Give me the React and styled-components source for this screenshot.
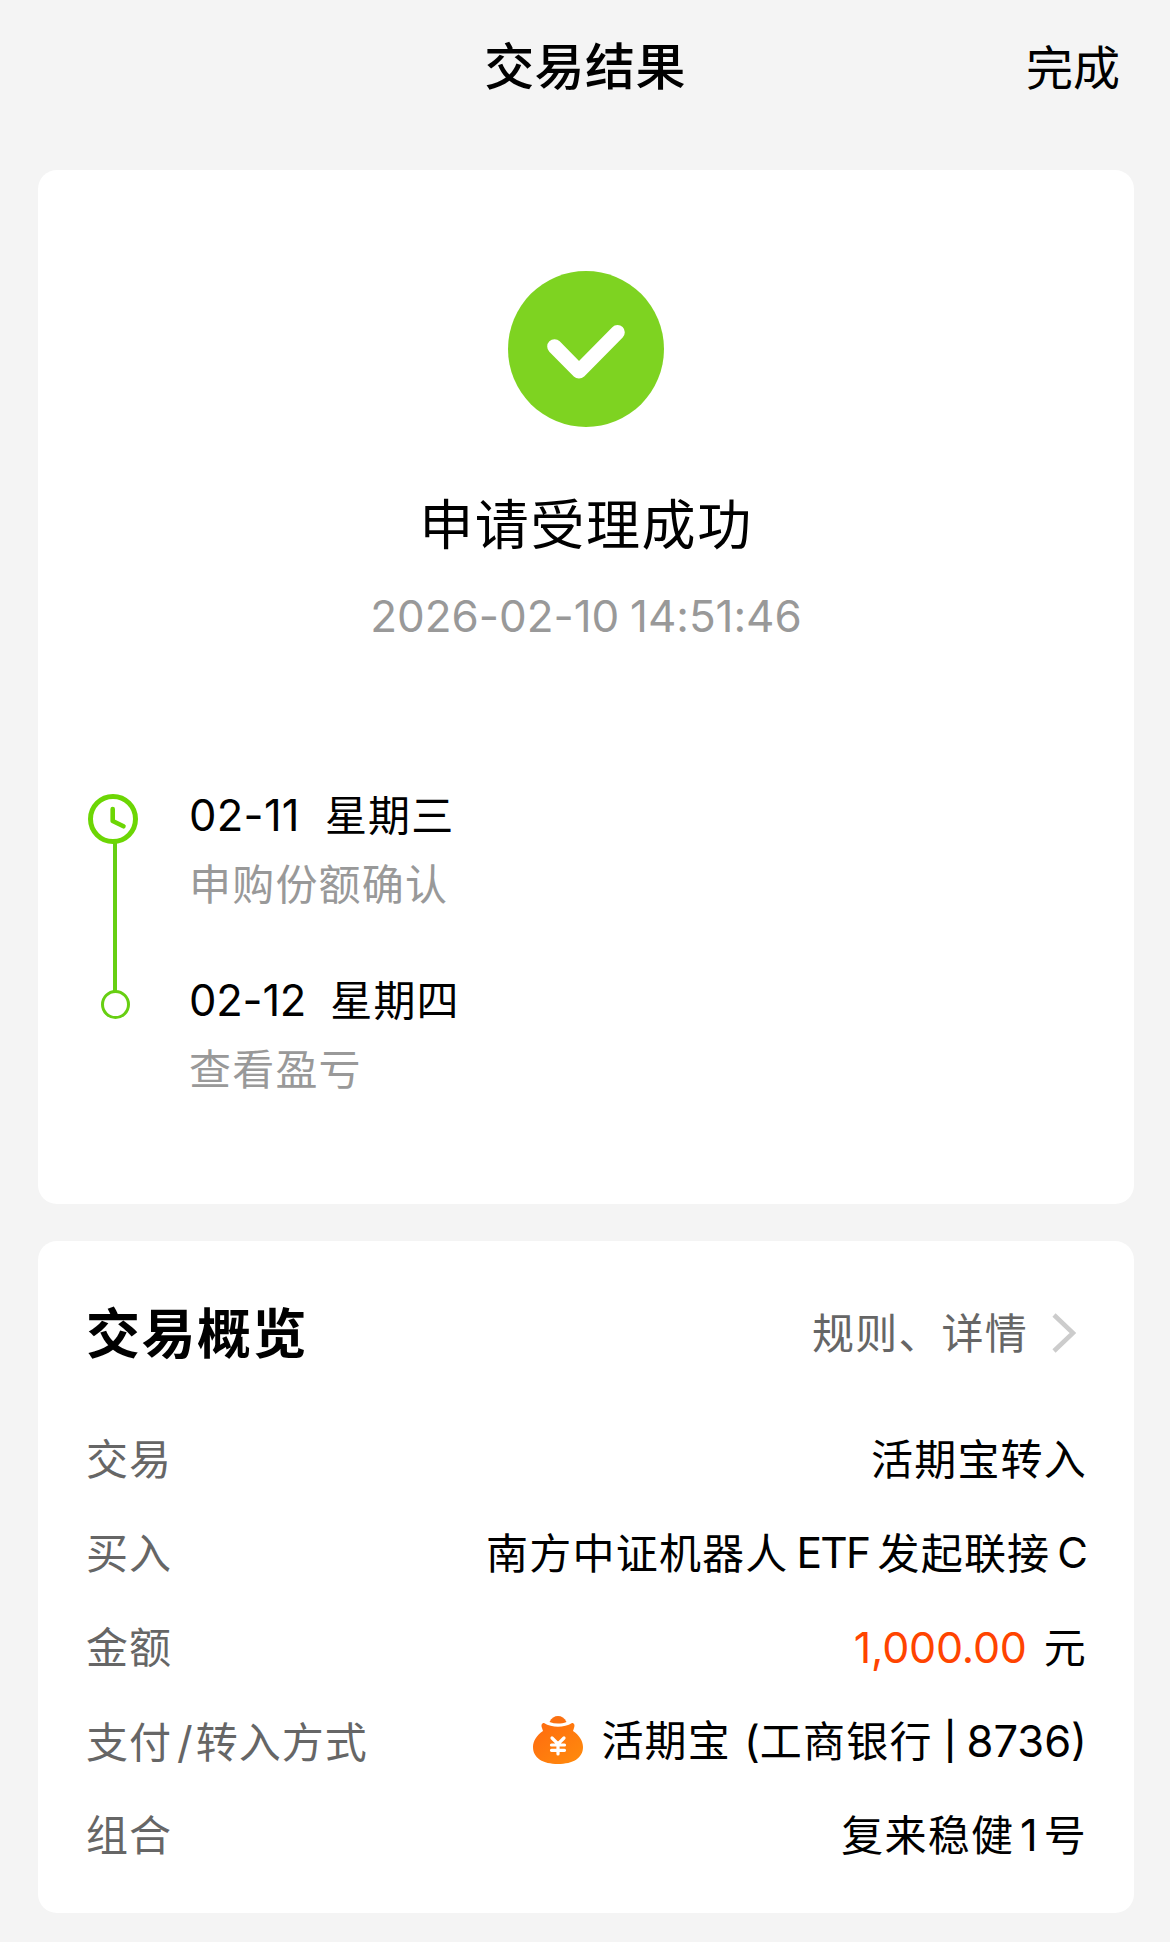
import styled, { createGlobalStyle } from "styled-components"

const GlobalStyle = createGlobalStyle`
  * {
    box-sizing: border-box;
  }
  body {
    margin: 0;
    background: #f4f4f4;
    color: #000;
    font-family: Inter, "Noto Sans CJK SC", sans-serif;
    font-size: 42px;
    letter-spacing: 1.2px;
  }
`
const Page = styled.div`
  width: 1170px;
  height: 1942px;
  padding: 0 36px 0 38px;
  overflow: hidden;
`
const Header = styled.header`
  display: grid;
  grid-template-columns: 1fr auto 1fr;
  height: 170px;
  padding-right: 14px;
  padding-left: 12px;
`
const Title = styled.h1`
  grid-column: 2;
  margin: 31px 0 0;
  font-size: 50px;
  font-weight: 500;
  line-height: 72px;
  letter-spacing: 0.4px;
`
const Done = styled.button`
  justify-self: end;
  align-self: start;
  margin-top: 32px;
  padding: 0;
  border: 0;
  background: none;
  color: #000;
  font: inherit;
  font-size: 47px;
  line-height: 72px;
  letter-spacing: 0;
`
const Card = styled.section`
  height: ${(props) => props.$height}px;
  margin-bottom: 37px;
  border-radius: 19px;
  background: #fff;
`
const Result = styled.div`
  display: flex;
  flex-direction: column;
  align-items: center;
  padding-top: 101px;
`
const ResultTitle = styled.h2`
  margin: 59px 0 0;
  font-size: 54px;
  font-weight: 400;
  line-height: 80px;
  letter-spacing: 1.6px;
`
const ResultTime = styled.div`
  margin-top: 20px;
  color: #999;
  font-size: 44px;
  line-height: 60px;
  letter-spacing: -0.05px;
  word-spacing: -1.5px;
`
const Timeline = styled.div`
  display: flex;
  align-items: flex-start;
  margin-top: 140px;
  padding-left: 50px;
`
const Steps = styled.div`
  display: flex;
  flex-direction: column;
  gap: 57px;
  margin-left: 49px;
`
const StepDate = styled.div`
  display: flex;
  align-items: center;
  gap: ${(props) => props.$gap}px;
  height: 60px;
  line-height: 60px;
`
const StepNote = styled.div`
  margin-top: 9px;
  margin-bottom: -1px;
  color: #999;
  line-height: 60px;
`
const CardHead = styled.div`
  display: flex;
  justify-content: space-between;
  align-items: center;
  height: 80px;
  margin: 0 48px 60px;
  padding-right: 10px;
`
const CardTitle = styled.h2`
  margin: 0;
  font-size: 54px;
  font-weight: 700;
  letter-spacing: 1.5px;
`
const More = styled.a`
  display: flex;
  align-items: center;
  gap: 24px;
  color: #666;

  svg {
    margin-top: 6px;
  }
`
const Overview = styled.div`
  padding-top: 49px;
`
const Row = styled.div`
  display: flex;
  justify-content: space-between;
  height: 60px;
  margin: 0 47px 34px 48px;
  line-height: 60px;
  white-space: pre;
`
const Label = styled.span`
  color: #666;
  letter-spacing: 1px;
`
const Value = styled.span`
  display: flex;
  align-items: center;

  svg {
    margin-bottom: 5px;
  }
`
const Latin = styled.span`
  margin: -2px ${(props) => props.$right || 0}px 0 ${(props) => props.$left || 0}px;
  font-size: ${(props) => props.$size || 43.5}px;
  letter-spacing: ${(props) => props.$spacing || 0}px;
`
const Amount = styled(Latin)`
  color: #ff4400;
`
const Divider = styled(Latin)`
  font-weight: 500;
`

const SuccessIcon = () => (
  <svg width="156" height="156" viewBox="0 0 156 156" fill="none">
    <circle cx="78" cy="78" r="78" fill="#7ed321" />
    <path d="M46.5 75.5L71 100.3L109.5 61.3" stroke="#fff" strokeWidth="14.6" strokeLinecap="round" strokeLinejoin="round" />
  </svg>
)

const StepsIcon = () => (
  <svg width="52" height="234" viewBox="0 -8 52 234" fill="none">
    <path d="M27 49V198" stroke="#67cf12" strokeWidth="4" />
    <circle cx="25" cy="25" r="22.5" stroke="#6cd604" strokeWidth="5" />
    <path d="M24.7 15V27L35.5 32.3" stroke="#6cd604" strokeWidth="4.6" strokeLinecap="round" strokeLinejoin="round" />
    <circle cx="27.5" cy="210.5" r="13" fill="#fff" stroke="#67cf12" strokeWidth="3" />
  </svg>
)

const Chevron = () => (
  <svg width="24" height="42" viewBox="0 0 24 42" fill="none">
    <path d="M2 3L21 21L2 39" stroke="#ccc" strokeWidth="4.6" />
  </svg>
)

const BagIcon = () => (
  <svg width="50" height="48" viewBox="0 0 50 48">
    <defs>
      <linearGradient id="bag" x1="0" y1="0" x2="1" y2="1">
        <stop offset="0" stopColor="#ff6a10" />
        <stop offset="1" stopColor="#ff8c0c" />
      </linearGradient>
    </defs>
    <path d="M16.5 6C18.5 1.8 21.5 0 25 0C28.5 0 31.5 1.8 33.5 6C28 8 22 8 16.5 6Z" fill="#fb7010" />
    <path d="M11 7C19 12 31 12 39 7C41.5 7 42 9.5 41 12L40 15C46 19 50 25 50 31C50 42 40 48 25 48C10 48 0 42 0 31C0 25 4 19 10 15L9 12C8 9.5 8.5 7 11 7Z" fill="url(#bag)" />
    <path d="M19 22L25 28L31 22M18.5 29H31.5M18.5 34.3H31.5M25 28V38" fill="none" stroke="#fff" strokeWidth="3.2" strokeLinecap="round" />
  </svg>
)

const App = () => {
  return (
    <Page>
      <GlobalStyle />
      <Header>
        <Title>交易结果</Title>
        <Done>完成</Done>
      </Header>

      <Card $height={1034}>
        <Result>
          <SuccessIcon />
          <ResultTitle>申请受理成功</ResultTitle>
          <ResultTime>2026-02-10 14:51:46</ResultTime>
        </Result>
        <Timeline>
          <StepsIcon />
          <Steps>
            <div>
              <StepDate $gap={25}>
                <Latin $spacing={0.3}>02-11</Latin>
                <span>星期三</span>
              </StepDate>
              <StepNote>申购份额确认</StepNote>
            </div>
            <div>
              <StepDate $gap={24}>
                <Latin $spacing={-0.2}>02-12</Latin>
                <span>星期四</span>
              </StepDate>
              <StepNote>查看盈亏</StepNote>
            </div>
          </Steps>
        </Timeline>
      </Card>

      <Card $height={672}>
        <Overview>
          <CardHead>
            <CardTitle>交易概览</CardTitle>
            <More>
              规则、详情
              <Chevron />
            </More>
          </CardHead>
          <Row>
            <Label>交易</Label>
            <Value>活期宝转入</Value>
          </Row>
          <Row>
            <Label>买入</Label>
            <Value>
              南方中证机器人
              <Latin $left={8} $right={8} $size={42.5} $spacing={-1.7}>ETF</Latin>
              发起联接
              <Latin $left={7} $right={-1} $size={42}>C</Latin>
            </Value>
          </Row>
          <Row>
            <Label>金额</Label>
            <Value>
              <Amount $right={17} $size={43} $spacing={-0.2}>1,000.00</Amount>元
            </Value>
          </Row>
          <Row>
            <Label>
              支付<Latin $left={5} $right={3}>/</Latin>转入方式
            </Label>
            <Value>
              <BagIcon />
              <Latin $left={18} $size={42} $spacing={1.2}>活期宝</Latin>
              <Latin $left={13}>(</Latin>
              工商银行
              <Divider $left={11} $right={10} $size={37}>|</Divider>
              <Latin>8736)</Latin>
            </Value>
          </Row>
          <Row>
            <Label>组合</Label>
            <Value>
              复来稳健
              <Latin $left={6} $right={6}>1</Latin>号
            </Value>
          </Row>
        </Overview>
      </Card>
    </Page>
  )
}

export default App
